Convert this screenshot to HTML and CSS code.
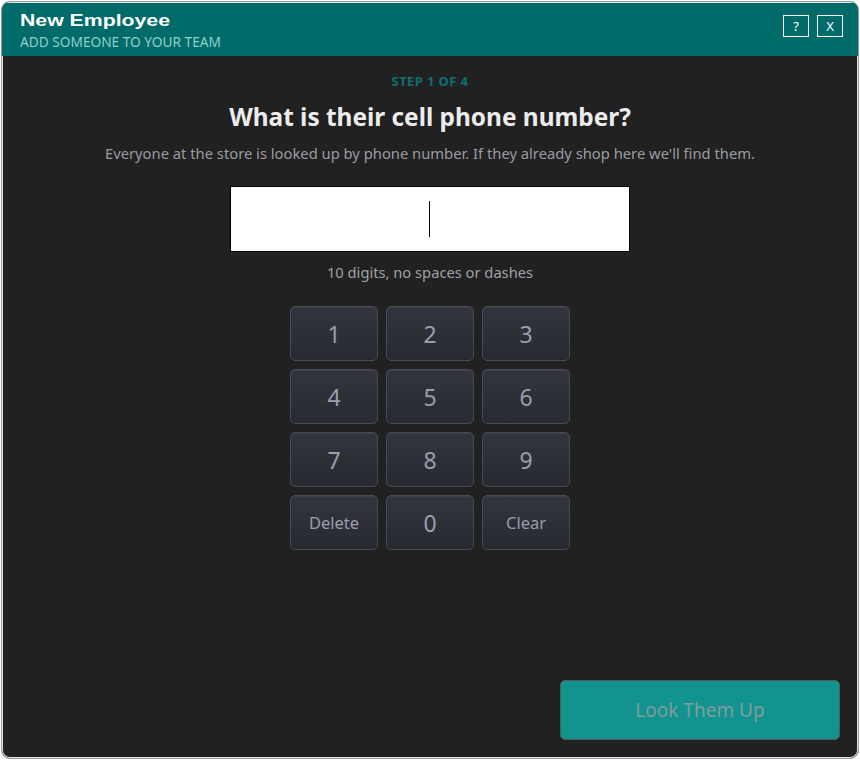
FILE: index.html
```html
<!DOCTYPE html>
<html>
<head>
<meta charset="utf-8">
<link rel="stylesheet" href="styles.css">
</head>
<body>
<div class="window">
  <header class="titlebar">
    <div class="titles">
      <div class="title">New Employee</div>
      <div class="subtitle">ADD SOMEONE TO YOUR TEAM</div>
    </div>
    <div class="controls">
      <button class="ctl">?</button>
      <button class="ctl">X</button>
    </div>
  </header>
  <main class="content">
    <div class="step">STEP 1 OF 4</div>
    <h1 class="question">What is their cell phone number?</h1>
    <p class="desc">Everyone at the store is looked up by phone number. If they already shop here we'll find them.</p>
    <div class="field"><span class="caret"></span></div>
    <p class="hint">10 digits, no spaces or dashes</p>
    <div class="keypad">
      <button class="key">1</button>
      <button class="key">2</button>
      <button class="key">3</button>
      <button class="key">4</button>
      <button class="key">5</button>
      <button class="key">6</button>
      <button class="key">7</button>
      <button class="key">8</button>
      <button class="key">9</button>
      <button class="key word">Delete</button>
      <button class="key">0</button>
      <button class="key word">Clear</button>
    </div>
    <div class="spacer"></div>
    <div class="actions">
      <button class="primary">Look Them Up</button>
    </div>
  </main>
</div>
</body>
</html>
```

FILE: styles.css
```css
html, body {
  margin: 0;
  padding: 0;
  background: #ffffff;
}
body {
  width: 860px;
  height: 760px;
  box-sizing: border-box;
  padding: 1px;
}
.window {
  width: 858px;
  height: 758px;
  box-sizing: border-box;
  border: 1px solid #9c9c9c;
  border-radius: 9px;
  overflow: hidden;
  background: #212121;
  box-shadow: inset 0 0 0 1px #e4e4e4;
  display: flex;
  flex-direction: column;
  font-family: "Noto Sans", "Open Sans", sans-serif;
}
.titlebar {
  height: 54px;
  flex: none;
  background: #006b68;
  display: flex;
  justify-content: space-between;
  align-items: flex-start;
  padding: 0 15px 0 18px;
  border-top: 1px solid #e4e4e4;
  box-sizing: border-box;
}
.titles {
  padding-top: 8px;
}
.title {
  font-family: "Liberation Sans", Arial, sans-serif;
  font-weight: bold;
  font-size: 17px;
  color: #ffffff;
  line-height: 20px;
  transform: scaleX(1.25);
  transform-origin: left center;
}
.subtitle {
  font-size: 13.7px;
  color: #8ed0cb;
  line-height: 18px;
  margin-top: 2px;
}
.controls {
  display: flex;
  gap: 8px;
  padding-top: 12px;
}
.ctl {
  width: 26px;
  height: 22px;
  box-sizing: border-box;
  border: 1px solid #ffffff;
  background: transparent;
  color: #ffffff;
  font-family: "Noto Sans", sans-serif;
  font-size: 13px;
  padding: 0;
  line-height: 18px;
}
.content {
  flex: 1;
  display: flex;
  flex-direction: column;
  align-items: center;
  padding-top: 17px;
  padding-bottom: 18px;
  box-sizing: border-box;
}
.step {
  font-size: 13px;
  font-weight: bold;
  color: #0b716e;
  line-height: 16px;
  letter-spacing: 0.4px;
}
.question {
  margin: 12px 0 0;
  font-size: 24.4px;
  font-weight: bold;
  color: #ececec;
  line-height: 32px;
}
.desc {
  margin: 10px 0 0;
  font-size: 14.75px;
  color: #9b9ba3;
  line-height: 20px;
}
.field {
  margin-top: 23px;
  width: 400px;
  height: 66px;
  box-sizing: border-box;
  background: #ffffff;
  border: 1px solid #000000;
  display: flex;
  justify-content: center;
  align-items: center;
}
.caret {
  display: block;
  width: 1px;
  height: 36px;
  background: #000;
  margin-right: 1px;
}
.hint {
  margin: 10px 0 0;
  font-size: 14.7px;
  color: #a0a0a6;
  line-height: 20px;
}
.keypad {
  margin-top: 24px;
  display: grid;
  grid-template-columns: repeat(3, 88px);
  grid-auto-rows: 55px;
  gap: 8px;
}
.key {
  box-sizing: border-box;
  border: 1px solid #474a55;
  border-radius: 5px;
  background: linear-gradient(#33353e, #282a31);
  color: #9a9dab;
  font-family: "Noto Sans", sans-serif;
  font-size: 23px;
  padding: 0;
  box-shadow: inset 0 1px 0 #3c3f49;
}
.key.word {
  font-size: 16.5px;
}
.spacer {
  flex: 1;
}
.actions {
  align-self: stretch;
  display: flex;
  justify-content: flex-end;
  padding-right: 18px;
}
.primary {
  width: 280px;
  height: 60px;
  box-sizing: border-box;
  background: #139390;
  border: 1px solid #4c5b5b;
  border-radius: 5px;
  color: #7e9d9c;
  font-family: "Noto Sans", sans-serif;
  font-size: 19px;
  padding: 0;
}
```
